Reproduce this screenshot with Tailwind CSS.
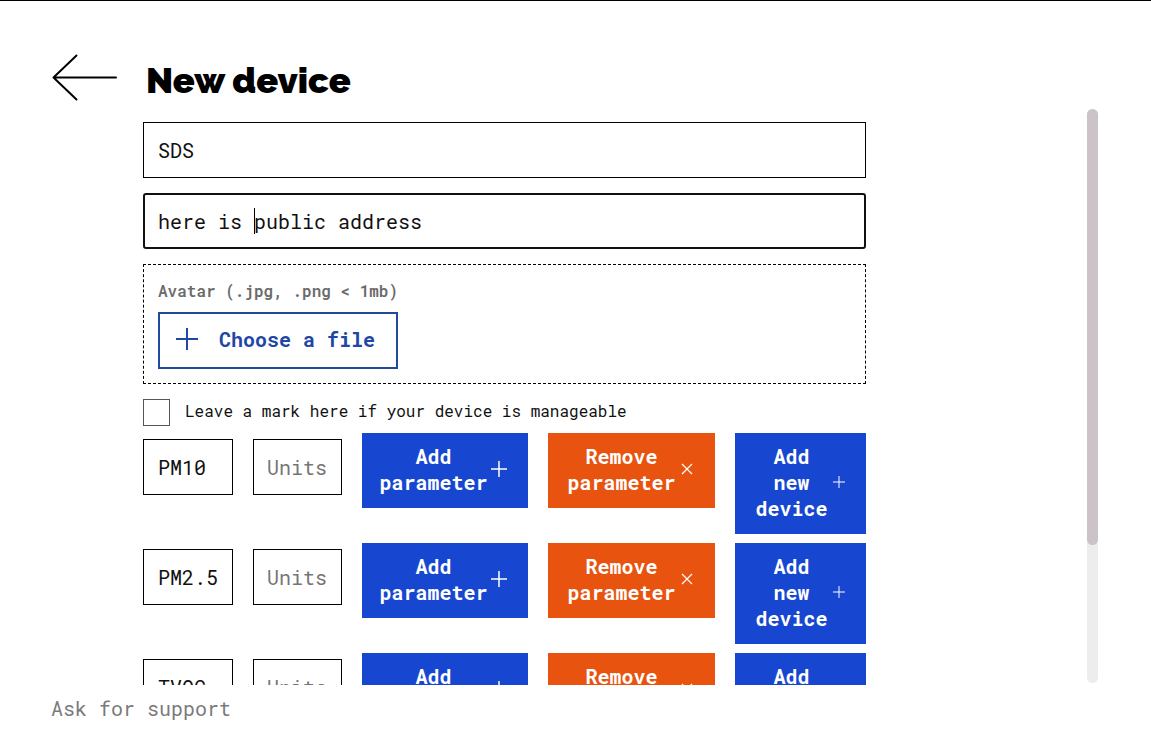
<!DOCTYPE html>
<html lang="en">
<head>
<meta charset="utf-8">
<meta name="viewport" content="width=device-width, initial-scale=1">
<title>New device</title>
<script src="https://cdn.jsdelivr.net/npm/@tailwindcss/browser@4"></script>
</head>
<body class="flex h-screen flex-col overflow-hidden border-t border-black bg-white font-['Roboto_Mono','DejaVu_Sans_Mono',monospace] text-xl text-[#111]">

<header class="flex h-[108px] shrink-0 items-start gap-[29px] pl-[52px] pt-[53px]">
  <a href="#" aria-label="Back" class="shrink-0">
    <svg class="block h-[47px] w-[65px]" viewBox="0 0 65 47" fill="none" stroke="#000" stroke-width="2" stroke-linecap="round" stroke-linejoin="round"><path d="M24.500 1.500 1.500 23.500 24.500 45.500M1.500 23.500H64"/></svg>
  </a>
  <h1 class="pt-1.5 font-[Raleway,Inter,sans-serif] text-4xl leading-10 font-black text-black">New device</h1>
</header>

<main class="flex min-h-0 flex-1 justify-between gap-8 pr-[53px] pl-[143px]">
  <form class="min-w-0 flex-1 max-w-[723px] overflow-hidden pt-[13px]">
    <div class="flex flex-col gap-[15px]">
      <input type="text" aria-label="Device name" value="SDS" class="h-14 w-full border border-black px-[14px] outline-none">
      <div class="relative">
        <input type="text" aria-label="Public address" value="here is public address" class="block h-14 w-full rounded-[3px] border-2 border-[#111] px-[13px] outline-none">
        <span class="absolute top-[15px] left-[111px] h-[26px] w-px bg-black"></span>
      </div>
      <div class="flex flex-col items-start gap-[9px] border border-dashed border-black p-[14px]">
        <span class="text-base leading-6 font-semibold text-[#6b6b6b]" id="avatar-label">Avatar (.jpg, .png &lt; 1mb)</span>
        <label class="relative flex h-[57px] w-[240px] items-center gap-5 border-2 border-[#1f4a9e] pb-[3px] pl-[15px] font-bold text-[#1f47a6]">
          <input type="file" aria-describedby="avatar-label" accept=".jpg,.png" class="sr-only">
          <svg class="size-6 shrink-0" viewBox="0 0 24 24" fill="none" stroke="currentColor" stroke-width="2"><path d="M12 1v22M1 12h22"/></svg>
          Choose a file
        </label>
      </div>
      <div class="flex items-center gap-[15px]">
        <input id="manageable" type="checkbox" class="size-[27px] shrink-0 appearance-none border border-[#555] bg-white checked:bg-[#1747d1]">
        <label for="manageable" class="pb-[3px] text-base leading-6">Leave a mark here if your device is manageable</label>
      </div>
    </div>

    <div class="mt-[7px] flex flex-col gap-[9px]">
      <div class="grid grid-cols-[90fr_89fr_166fr_167fr_131fr] items-start gap-x-5">
        <input type="text" aria-label="Parameter" value="PM10" class="mt-1.5 h-14 w-full min-w-0 border border-black pr-2 pl-[14px] outline-none">
        <input type="text" aria-label="Units" placeholder="Units" class="mt-1.5 h-14 w-full min-w-0 border border-black pr-2 pl-[13px] outline-none placeholder:text-[#757575]">
        <button type="button" class="flex items-center justify-start gap-[3px] bg-[#1747d1] pt-2.5 pb-[13px] pl-[17px] leading-[26px] font-bold text-white"><span class="w-[109px] shrink-0">Add parameter</span><svg class="size-4 shrink-0" viewBox="0 0 16 16" stroke="currentColor" stroke-width="1.500"><path d="M8 0v16M0 8h16"/></svg></button>
        <button type="button" class="flex items-center justify-start gap-[5px] bg-[#e85310] pt-2.5 pb-[13px] pl-[19px] leading-[26px] font-bold text-white"><span class="w-[109px] shrink-0">Remove parameter</span><svg class="size-3 shrink-0" viewBox="0 0 12 12" stroke="currentColor" stroke-width="1.200"><path d="m1 1 10 10M11 1 1 11"/></svg></button>
        <button type="button" class="flex items-center justify-start gap-[5px] bg-[#1747d1] pt-2.5 pb-[13px] pl-5 leading-[26px] font-bold text-white"><span class="w-[73px] shrink-0">Add new device</span><svg class="size-3 shrink-0" viewBox="0 0 12 12" stroke="currentColor"><path d="M6 0v12M0 6h12"/></svg></button>
      </div>
      <div class="grid grid-cols-[90fr_89fr_166fr_167fr_131fr] items-start gap-x-5">
        <input type="text" aria-label="Parameter" value="PM2.5" class="mt-1.5 h-14 w-full min-w-0 border border-black pr-2 pl-[14px] outline-none">
        <input type="text" aria-label="Units" placeholder="Units" class="mt-1.5 h-14 w-full min-w-0 border border-black pr-2 pl-[13px] outline-none placeholder:text-[#757575]">
        <button type="button" class="flex items-center justify-start gap-[3px] bg-[#1747d1] pt-2.5 pb-[13px] pl-[17px] leading-[26px] font-bold text-white"><span class="w-[109px] shrink-0">Add parameter</span><svg class="size-4 shrink-0" viewBox="0 0 16 16" stroke="currentColor" stroke-width="1.500"><path d="M8 0v16M0 8h16"/></svg></button>
        <button type="button" class="flex items-center justify-start gap-[5px] bg-[#e85310] pt-2.5 pb-[13px] pl-[19px] leading-[26px] font-bold text-white"><span class="w-[109px] shrink-0">Remove parameter</span><svg class="size-3 shrink-0" viewBox="0 0 12 12" stroke="currentColor" stroke-width="1.200"><path d="m1 1 10 10M11 1 1 11"/></svg></button>
        <button type="button" class="flex items-center justify-start gap-[5px] bg-[#1747d1] pt-2.5 pb-[13px] pl-5 leading-[26px] font-bold text-white"><span class="w-[73px] shrink-0">Add new device</span><svg class="size-3 shrink-0" viewBox="0 0 12 12" stroke="currentColor"><path d="M6 0v12M0 6h12"/></svg></button>
      </div>
      <div class="grid grid-cols-[90fr_89fr_166fr_167fr_131fr] items-start gap-x-5">
        <input type="text" aria-label="Parameter" value="TVOC" class="mt-1.5 h-14 w-full min-w-0 border border-black pr-2 pl-[14px] outline-none">
        <input type="text" aria-label="Units" placeholder="Units" class="mt-1.5 h-14 w-full min-w-0 border border-black pr-2 pl-[13px] outline-none placeholder:text-[#757575]">
        <button type="button" class="flex items-center justify-start gap-[3px] bg-[#1747d1] pt-2.5 pb-[13px] pl-[17px] leading-[26px] font-bold text-white"><span class="w-[109px] shrink-0">Add parameter</span><svg class="size-4 shrink-0" viewBox="0 0 16 16" stroke="currentColor" stroke-width="1.500"><path d="M8 0v16M0 8h16"/></svg></button>
        <button type="button" class="flex items-center justify-start gap-[5px] bg-[#e85310] pt-2.5 pb-[13px] pl-[19px] leading-[26px] font-bold text-white"><span class="w-[109px] shrink-0">Remove parameter</span><svg class="size-3 shrink-0" viewBox="0 0 12 12" stroke="currentColor" stroke-width="1.200"><path d="m1 1 10 10M11 1 1 11"/></svg></button>
        <button type="button" class="flex items-center justify-start gap-[5px] bg-[#1747d1] pt-2.5 pb-[13px] pl-5 leading-[26px] font-bold text-white"><span class="w-[73px] shrink-0">Add new device</span><svg class="size-3 shrink-0" viewBox="0 0 12 12" stroke="currentColor"><path d="M6 0v12M0 6h12"/></svg></button>
      </div>
    </div>
  </form>

  <div class="mb-0.5 w-[11px] shrink-0 rounded-full bg-[#ededed]">
    <div class="h-[76%] rounded-full bg-[#cbc3c7]"></div>
  </div>
</main>

<footer class="h-16 shrink-0 pt-[9px] pl-[51px]">
  <a href="#" class="text-xl leading-7 text-[#7b7b7b]">Ask for support</a>
</footer>
</body>
</html>
